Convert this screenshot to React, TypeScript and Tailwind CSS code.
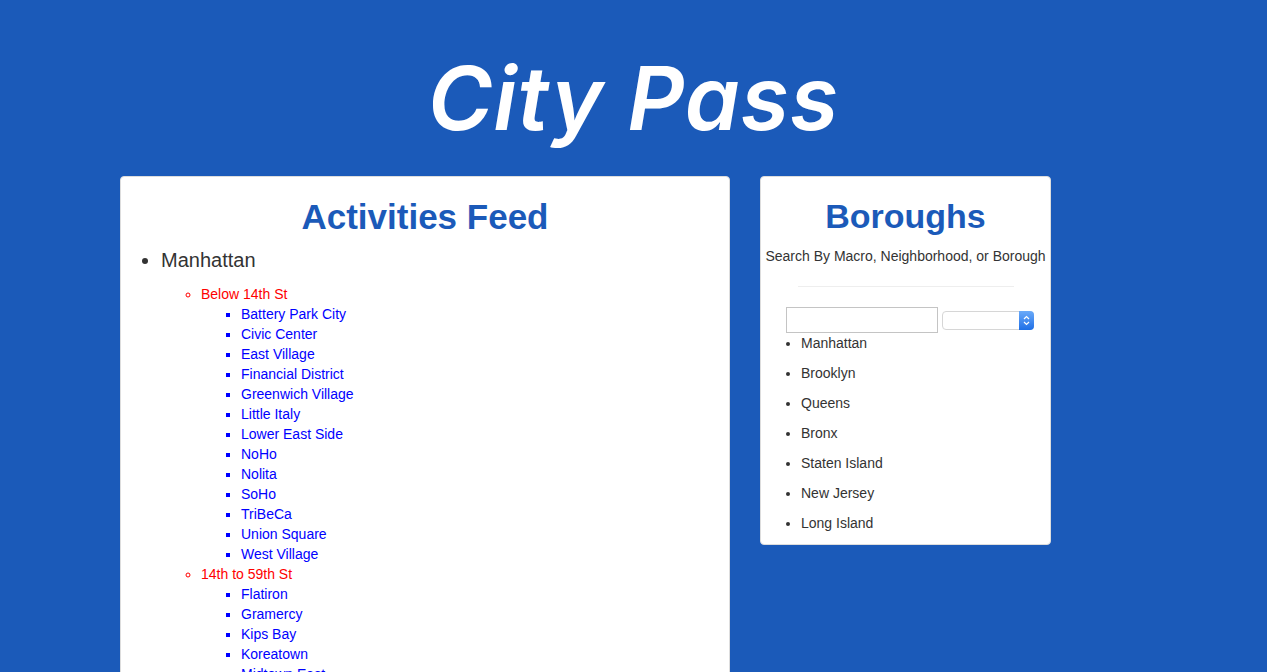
import React from 'react';

const below14 = [
  'Battery Park City',
  'Civic Center',
  'East Village',
  'Financial District',
  'Greenwich Village',
  'Little Italy',
  'Lower East Side',
  'NoHo',
  'Nolita',
  'SoHo',
  'TriBeCa',
  'Union Square',
  'West Village',
];

const midtown = [
  'Flatiron',
  'Gramercy',
  'Kips Bay',
  'Koreatown',
  'Midtown East',
  'Midtown West',
  'Murray Hill',
  'Chelsea',
];

const boroughs = ['Manhattan', 'Brooklyn', 'Queens', 'Bronx', 'Staten Island', 'New Jersey', 'Long Island'];

function Neighborhoods({ items }: { items: string[] }) {
  return (
    <ul className="list-[square] pl-10 text-[#0000ff]">
      {items.map((n) => (
        <li key={n} className="leading-5">
          {n}
        </li>
      ))}
    </ul>
  );
}

export default function App() {
  return (
    <div
      className="min-h-screen bg-[#1b5ab9] text-[14px] text-[#333]"
      style={{ fontFamily: '"Liberation Sans", Arial, sans-serif' }}
    >
      <h1
        className="pt-[50px] text-center text-[88px] font-semibold italic leading-[96px] tracking-[1px] text-white"
        style={{ fontFamily: 'Inter, sans-serif' }}
      >
        City Pass
      </h1>

      <div className="mt-[30px] flex items-start gap-[30px] pl-[120px]">
        {/* activities feed */}
        <div className="w-[610px] rounded-[4px] border border-[#ddd] bg-white pb-5">
          <h2 className="mt-5 mb-[10px] text-center text-[35px] font-bold leading-[39px] text-[#1b5ab9]">
            Activities Feed
          </h2>
          <ul className="list-disc pl-10">
            <li className="text-[20px] leading-[28px]">Manhattan</li>
          </ul>
          <ul className="mt-[10px] list-[circle] pl-20 text-[#ff0000]">
            <li className="leading-5">Below 14th St</li>
            <Neighborhoods items={below14} />
            <li className="leading-5">14th to 59th St</li>
            <Neighborhoods items={midtown} />
          </ul>
        </div>

        {/* boroughs */}
        <div className="w-[291px] rounded-[4px] border border-[#ddd] bg-white pb-[1px]">
          <h2 className="mt-5 mb-[10px] text-center text-[34px] font-bold leading-[39px] text-[#1b5ab9]">
            Boroughs
          </h2>
          <p className="text-center leading-5 whitespace-nowrap">Search By Macro, Neighborhood, or Borough</p>
          <hr className="mx-auto my-5 w-[216px] border-[#eee]" />
          <div className="flex items-center gap-1 pl-[25px]">
            <input type="text" className="h-[26px] w-[152px] border border-[#c4c4c4] bg-white" />
            <div className="relative h-[19px] w-[92px]">
              <select className="h-full w-full appearance-none rounded-[4px] border border-[#d6d6d6] bg-white" />
              <div className="absolute top-0 right-0 flex h-[19px] w-[15px] items-center justify-center rounded-r-[4px] bg-gradient-to-b from-[#6aaaf9] to-[#1d6fe6]">
                <svg width="7" height="11" viewBox="0 0 7 11" fill="none" stroke="white" strokeWidth="1.2">
                  <path d="M1 4 L3.5 1.5 L6 4" />
                  <path d="M1 7 L3.5 9.5 L6 7" />
                </svg>
              </div>
            </div>
          </div>
          <ul className="list-disc pl-10">
            {boroughs.map((b) => (
              <li key={b} className="mb-[10px] leading-5">
                {b}
              </li>
            ))}
          </ul>
        </div>
      </div>
    </div>
  );
}
